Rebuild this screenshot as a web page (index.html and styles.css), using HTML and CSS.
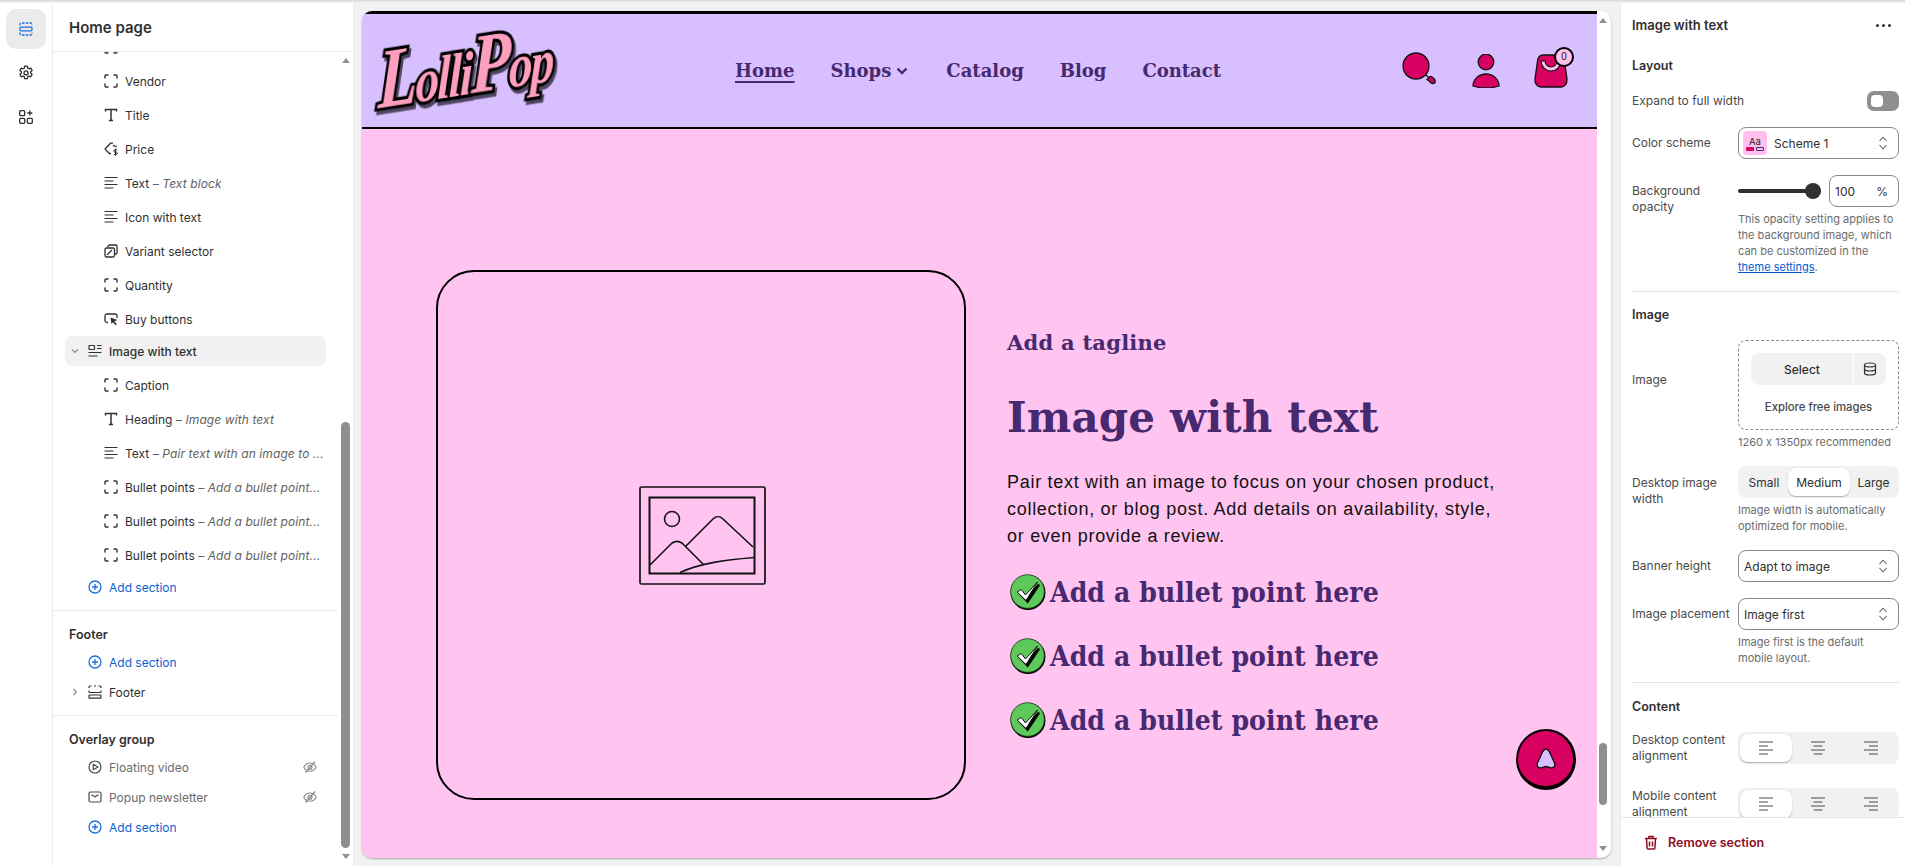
FILE: index.html
```html
<!DOCTYPE html>
<html lang="en">
<head>
<meta charset="utf-8">
<title>Home page</title>
<link rel="stylesheet" href="styles.css">
</head>
<body>
<svg class="defs" width="0" height="0" aria-hidden="true">
  <symbol id="i-block" viewBox="0 0 14 14"><path d="M1 4V2.200C1 1.500 1.500 1 2.200 1H4M10 1h1.800c.7 0 1.200.5 1.200 1.200V4M13 10v1.800c0 .7-.5 1.200-1.200 1.200H10M4 13H2.200C1.500 13 1 12.500 1 11.800V10" fill="none" stroke="currentColor" stroke-width="1.400" stroke-linecap="round"/></symbol>
  <symbol id="i-title" viewBox="0 0 14 14"><path d="M1.500 3.500V1.500h11v2M7 1.500v11M5 12.500h4" fill="none" stroke="currentColor" stroke-width="1.500"/></symbol>
  <symbol id="i-price" viewBox="0 0 14 14"><path d="M9 1.200H6.500L1 7l4.300 4.500H7M12 5.500V3.500" fill="none" stroke="currentColor" stroke-width="1.300" stroke-linejoin="round"/><circle cx="10" cy="3.700" r="1" fill="currentColor"/><path d="M13.200 7.800h-2.300a1.100 1.100 0 0 0 0 2.300h1.200a1.100 1.100 0 0 1 0 2.300H9.800M11.500 6.800v6.800" fill="none" stroke="currentColor" stroke-width="1"/></symbol>
  <symbol id="i-text" viewBox="0 0 14 14"><path d="M.5 1.500h13M.5 5h9M.5 8.500h13M.5 12h9" fill="none" stroke="currentColor" stroke-width="1.200"/></symbol>
  <symbol id="i-variant" viewBox="0 0 14 14"><path d="M4 3.500V2.300C4 1.600 4.600 1 5.300 1h6.400C12.400 1 13 1.600 13 2.300v6.400c0 .7-.6 1.300-1.300 1.300H10.500" fill="none" stroke="currentColor" stroke-width="1.300"/><rect x="1" y="4" width="9.500" height="9" rx="1.500" fill="none" stroke="currentColor" stroke-width="1.300"/><path d="M3 11l5-5" stroke="currentColor" stroke-width="1.300"/></symbol>
  <symbol id="i-buy" viewBox="0 0 14 14"><path d="M4 10.500H3C1.900 10.500 1 9.600 1 8.500V4c0-1.100.9-2 2-2h8c1.100 0 2 .9 2 2v2" fill="none" stroke="currentColor" stroke-width="1.300"/><path d="M6.500 5.500l7 2.500-3 1.200 2.300 3-1.300 1-2.300-3L7.500 12z" fill="currentColor"/></symbol>
  <symbol id="i-section" viewBox="0 0 14 14"><path d="M1 1.500h5.500M1 5.500h5.500M1 1.500v4M6.500 1.500v4M9 1.500h4.500M9 4.500h4.500M.5 8.500h13M.5 12h9" fill="none" stroke="currentColor" stroke-width="1.200"/></symbol>
  <symbol id="i-plus" viewBox="0 0 14 14"><circle cx="7" cy="7" r="6" fill="none" stroke="currentColor" stroke-width="1.300"/><path d="M7 4v6M4 7h6" stroke="currentColor" stroke-width="1.300"/></symbol>
  <symbol id="i-footer" viewBox="0 0 14 14"><path d="M1 3V2c0-.5.500-1 1-1h1.500M6 1h2M10.500 1H12c.5 0 1 .5 1 1v1M1 5.500v1c0 .5.500 1 1 1h10c.5 0 1-.5 1-1v-1" fill="none" stroke="currentColor" stroke-width="1.200"/><rect x="1" y="10" width="12" height="3.200" rx=".8" fill="none" stroke="currentColor" stroke-width="1.200"/></symbol>
  <symbol id="i-play" viewBox="0 0 14 14"><circle cx="7" cy="7" r="6" fill="none" stroke="currentColor" stroke-width="1.200"/><path d="M5.200 4.300v5.400L10 7z" fill="none" stroke="currentColor" stroke-width="1.200" stroke-linejoin="round"/></symbol>
  <symbol id="i-mail" viewBox="0 0 14 14"><rect x="1" y="2" width="12" height="10" rx="1.500" fill="none" stroke="currentColor" stroke-width="1.200"/><path d="M3.500 4.800L7 6.800l3.500-2" fill="none" stroke="currentColor" stroke-width="1.200"/></symbol>
  <symbol id="i-eye" viewBox="0 0 14 14"><path d="M.8 7.200C2.200 4.500 4.400 3 7 3s4.800 1.500 6.200 4.200C11.800 9.800 9.600 11.300 7 11.300S2.200 9.800.8 7.200z" fill="none" stroke="currentColor" stroke-width="1.100"/><circle cx="7" cy="7.200" r="2" fill="none" stroke="currentColor" stroke-width="1.100"/><path d="M2.500 12.500L12 1.500" stroke="currentColor" stroke-width="1.200"/></symbol>
  <symbol id="i-updown" viewBox="0 0 10 16"><path d="M1.500 6L5 2.200 8.500 6M1.500 10L5 13.800 8.500 10" fill="none" stroke="currentColor" stroke-width="1.100"/></symbol>
  <symbol id="i-left" viewBox="0 0 14 14"><path d="M0 1h14M0 5h9M0 9h14M0 13h9" stroke="currentColor" stroke-width="1.200"/></symbol>
  <symbol id="i-center" viewBox="0 0 14 14"><path d="M0 1h14M2.500 5h9M0 9h14M2.500 13h9" stroke="currentColor" stroke-width="1.200"/></symbol>
  <symbol id="i-right" viewBox="0 0 14 14"><path d="M0 1h14M5 5h9M0 9h14M5 13h9" stroke="currentColor" stroke-width="1.200"/></symbol>
  <symbol id="i-check" viewBox="0 0 36 36"><circle cx="18" cy="18.500" r="17.500" fill="#000"/><circle cx="17.500" cy="17.500" r="16.800" fill="#5fc85a" stroke="#1c3d1a" stroke-width=".8"/><path d="M7.500 18.500l4.500-2.500 3.800 5 11-12.500 2.500 1-12.500 18.500z" fill="#000" transform="translate(1 1.500)"/><path d="M7 18l4.300-2.500 4.200 5.500 12-13-11.500 18.500z" fill="#fff" stroke="#000" stroke-width=".9" stroke-linejoin="round"/></symbol>
</svg>

<div class="app">
  <nav class="rail">
    <button class="rail-btn is-active" aria-label="Sections">
      <svg width="14" height="14" viewBox="0 0 14 14"><path d="M1 3.500V2.300C1 1.600 1.600 1 2.300 1h9.400c.7 0 1.300.6 1.300 1.300v1.200M1 10.500v1.200c0 .7.600 1.300 1.300 1.300h9.400c.7 0 1.300-.6 1.300-1.300v-1.200" fill="none" stroke="#1a6fe0" stroke-width="1.300" stroke-dasharray="2.500 1.200"/><rect x="1" y="5.200" width="12" height="3.600" rx="1" fill="none" stroke="#1a6fe0" stroke-width="1.300"/></svg>
    </button>
    <button class="rail-btn" aria-label="Settings">
      <svg width="16" height="16" viewBox="0 0 16 16"><path d="M6.700 1.200h2.600l.4 1.900 1.300.7 1.800-.7 1.300 2.300-1.400 1.300v1.500l1.400 1.300-1.300 2.300-1.800-.7-1.300.7-.4 1.900H6.700l-.4-1.900-1.300-.7-1.800.7-1.300-2.300 1.400-1.300V6.700L1.900 5.400l1.300-2.300 1.800.7 1.300-.7z" fill="none" stroke="#303030" stroke-width="1.300" stroke-linejoin="round"/><circle cx="8" cy="7.900" r="2" fill="none" stroke="#303030" stroke-width="1.300"/></svg>
    </button>
    <button class="rail-btn" aria-label="Apps">
      <svg width="14" height="14" viewBox="0 0 14 14"><g fill="none" stroke="#303030" stroke-width="1.300"><rect x=".7" y=".7" width="5" height="5" rx="1"/><rect x=".7" y="8.300" width="5" height="5" rx="1"/><rect x="8.300" y="8.300" width="5" height="5" rx="1"/><path d="M10.800.5v5M8.300 3h5"/></g></svg>
    </button>
  </nav>

  <aside class="tree">
    <h1 class="tree-title">Home page</h1>
    <div class="tree-body">
      <div class="tree-list">
        <ul class="rows rows-clipped">
          <li class="row sub"><svg class="ic"><use href="#i-block"/></svg><span>Product</span></li>
          <li class="row sub"><svg class="ic"><use href="#i-block"/></svg><span>Vendor</span></li>
          <li class="row sub"><svg class="ic"><use href="#i-title"/></svg><span>Title</span></li>
          <li class="row sub"><svg class="ic"><use href="#i-price"/></svg><span>Price</span></li>
          <li class="row sub"><svg class="ic"><use href="#i-text"/></svg><span>Text <i>– Text block</i></span></li>
          <li class="row sub"><svg class="ic"><use href="#i-text"/></svg><span>Icon with text</span></li>
          <li class="row sub"><svg class="ic"><use href="#i-variant"/></svg><span>Variant selector</span></li>
          <li class="row sub"><svg class="ic"><use href="#i-block"/></svg><span>Quantity</span></li>
          <li class="row sub"><svg class="ic"><use href="#i-buy"/></svg><span>Buy buttons</span></li>
          <li class="row top is-selected">
            <svg class="chev" viewBox="0 0 10 10"><path d="M2 3.500l3 3 3-3" fill="none" stroke="currentColor" stroke-width="1.100"/></svg>
            <svg class="ic"><use href="#i-section"/></svg><span>Image with text</span>
          </li>
          <li class="row sub"><svg class="ic"><use href="#i-block"/></svg><span>Caption</span></li>
          <li class="row sub"><svg class="ic"><use href="#i-title"/></svg><span>Heading <i>– Image with text</i></span></li>
          <li class="row sub"><svg class="ic"><use href="#i-text"/></svg><span>Text <i>– Pair text with an image to ...</i></span></li>
          <li class="row sub"><svg class="ic"><use href="#i-block"/></svg><span>Bullet points <i>– Add a bullet point...</i></span></li>
          <li class="row sub"><svg class="ic"><use href="#i-block"/></svg><span>Bullet points <i>– Add a bullet point...</i></span></li>
          <li class="row sub"><svg class="ic"><use href="#i-block"/></svg><span>Bullet points <i>– Add a bullet point...</i></span></li>
          <li class="row top add"><svg class="ic"><use href="#i-plus"/></svg><span>Add section</span></li>
        </ul>
        <section class="group">
          <h2 class="group-title">Footer</h2>
          <ul class="rows">
            <li class="row top add"><svg class="ic"><use href="#i-plus"/></svg><span>Add section</span></li>
            <li class="row top">
              <svg class="chev" viewBox="0 0 10 10"><path d="M3.500 2l3 3-3 3" fill="none" stroke="currentColor" stroke-width="1.100"/></svg>
              <svg class="ic"><use href="#i-footer"/></svg><span>Footer</span>
            </li>
          </ul>
        </section>
        <section class="group">
          <h2 class="group-title">Overlay group</h2>
          <ul class="rows">
            <li class="row top is-hidden"><svg class="ic"><use href="#i-play"/></svg><span>Floating video</span><svg class="eye"><use href="#i-eye"/></svg></li>
            <li class="row top is-hidden"><svg class="ic"><use href="#i-mail"/></svg><span>Popup newsletter</span><svg class="eye"><use href="#i-eye"/></svg></li>
            <li class="row top add"><svg class="ic"><use href="#i-plus"/></svg><span>Add section</span></li>
          </ul>
        </section>
      </div>
      <div class="sbar sbar-tree">
        <span class="arrow-up"></span>
        <span class="thumb thumb-tree"></span>
        <span class="arrow-down"></span>
      </div>
    </div>
  </aside>

  <main class="preview">
    <div class="page">
      <header class="shop-head">
        <div class="logo"><span class="logo-word"><span class="cap">L</span>olli<span class="cap">P</span>op</span></div>
        <nav class="shop-nav">
          <a class="is-current">Home</a>
          <a class="has-caret">Shops<svg width="12" height="8" viewBox="0 0 12 8"><path d="M1.500 1.500L6 6l4.500-4.500" fill="none" stroke="#46296e" stroke-width="2.400"/></svg></a>
          <a>Catalog</a>
          <a>Blog</a>
          <a>Contact</a>
        </nav>
        <div class="shop-icons">
          <svg class="si-search" width="36" height="36" viewBox="0 0 36 36"><circle cx="14" cy="14" r="13" fill="#d80060" stroke="#111" stroke-width="1.300"/><path d="M24 23l2 2" stroke="#111" stroke-width="1.300"/><path d="M25 27.500l2.500-2.800c1-.6 2-.3 3 .6 2 1.700 3 3.500 2.700 4.800-.4 1.400-2.300 1.800-3.700 1z" fill="#d80060" stroke="#111" stroke-width="1.300"/></svg>
          <svg class="si-user" width="28" height="34" viewBox="0 0 28 34"><circle cx="14" cy="8" r="7.800" fill="#d80060" stroke="#111" stroke-width="1.300"/><path d="M1 32c0-7 6-12 13-12s13 5 13 12c-4 1.500-8 1.800-13 1.800S5 33.500 1 32z" fill="#d80060" stroke="#111" stroke-width="1.300"/></svg>
          <div class="si-bag">
            <svg width="34" height="34" viewBox="0 0 34 34"><path d="M9 1h16c3 0 5 2 5.500 6L33 25c.3 5-2.500 8-6 8H7c-3.500 0-6.300-3-6-8L3.500 7C4 3 6 1 9 1z" fill="#d80060" stroke="#111" stroke-width="1.300"/><path d="M7 7c0 5 4 10 10 10s10-5 10-10h-4c0 3-2.500 6-6 6s-6-3-6-6z" fill="#ffc0ee" stroke="#111" stroke-width="1.100"/></svg>
            <span class="bag-count">0</span>
          </div>
        </div>
      </header>
      <section class="hero">
        <div class="placeholder">
          <svg width="127" height="99" viewBox="0 0 127 99"><g fill="none" stroke="#111"><rect x="1" y="1" width="125" height="97" rx="1.500" stroke-width="1.700"/><rect x="10.500" y="11.500" width="105" height="76" stroke-width="2"/><circle cx="33" cy="33" r="7.500" stroke-width="1.500"/><path d="M11 79l22-22c3-2 7-2 10 0l21 21M47 60l27-27c3-3 7-3 10 0l30 28M41 86.500C62 77 86 74 115 71.500" stroke-width="1.600"/></g></svg>
        </div>
        <div class="hero-text">
          <p class="tagline">Add a tagline</p>
          <h2 class="hero-title">Image with text</h2>
          <p class="hero-copy">Pair text with an image to focus on your chosen product, collection, or blog post. Add details on availability, style, or even provide a review.</p>
          <ul class="bullets">
            <li><svg class="tick"><use href="#i-check"/></svg><span>Add a bullet point here</span></li>
            <li><svg class="tick"><use href="#i-check"/></svg><span>Add a bullet point here</span></li>
            <li><svg class="tick"><use href="#i-check"/></svg><span>Add a bullet point here</span></li>
          </ul>
        </div>
        <button class="fab" aria-label="Back to top">
          <svg width="24" height="24" viewBox="0 0 24 24"><path d="M12 2c1.500 0 2.500 1 3.500 3l5 11c1 3-.5 5-3 5-2.500 0-3.500-1.500-5.500-1.500S9 21 6.500 21 2.500 19 3.500 16l5-11C9.500 3 10.500 2 12 2z" fill="#d8bfff" stroke="#111" stroke-width="1.300"/></svg>
        </button>
      </section>
    </div>
    <div class="sbar sbar-page">
      <span class="arrow-up"></span>
      <span class="thumb thumb-page"></span>
      <span class="arrow-down"></span>
    </div>
  </main>

  <aside class="props">
    <div class="props-head">
      <h2>Image with text</h2>
      <span class="dots"><b></b><b></b><b></b></span>
    </div>
    <div class="props-body">
      <section class="pgroup pg-layout">
        <h3>Layout</h3>
        <div class="field f-toggle">
          <label>Expand to full width</label>
          <span class="toggle"><b></b></span>
        </div>
        <div class="field f-scheme">
          <label>Color scheme</label>
          <div class="select select-scheme">
            <span class="swatch"><span class="aa">Aa</span><span class="sw-bars"><b></b><u></u></span></span>
            <span>Scheme 1</span>
            <svg class="updown"><use href="#i-updown"/></svg>
          </div>
        </div>
        <div class="field f-opacity">
          <label>Background opacity</label>
          <div class="control">
            <div class="slider-line">
              <span class="slider"><b></b></span>
              <span class="num"><span>100</span><span>%</span></span>
            </div>
            <p class="help help-op">This opacity setting applies to the background image, which can be customized in the <a>theme settings</a>.</p>
          </div>
        </div>
      </section>
      <section class="pgroup pg-image">
        <h3>Image</h3>
        <div class="field f-image">
          <label>Image</label>
          <div class="control">
            <div class="drop">
              <div class="drop-btns"><span class="sel">Select</span><span class="db"><svg width="14" height="14" viewBox="0 0 14 14"><g fill="none" stroke="#303030" stroke-width="1.200"><ellipse cx="7" cy="3" rx="5.500" ry="2"/><path d="M1.500 3v8c0 1.100 2.500 2 5.500 2s5.500-.9 5.500-2V3M1.500 7c0 1.100 2.500 2 5.500 2s5.500-.9 5.500-2"/></g></svg></span></div>
              <span class="explore">Explore free images</span>
            </div>
            <p class="help help-rec">1260 x 1350px recommended</p>
          </div>
        </div>
        <div class="field f-width">
          <label>Desktop image width</label>
          <div class="control">
            <div class="seg seg-text"><span>Small</span><span class="on">Medium</span><span>Large</span></div>
            <p class="help help-w">Image width is automatically optimized for mobile.</p>
          </div>
        </div>
        <div class="field f-banner">
          <label>Banner height</label>
          <div class="select"><span>Adapt to image</span><svg class="updown"><use href="#i-updown"/></svg></div>
        </div>
        <div class="field f-place">
          <label>Image placement</label>
          <div class="control">
            <div class="select"><span>Image first</span><svg class="updown"><use href="#i-updown"/></svg></div>
            <p class="help help-w">Image first is the default mobile layout.</p>
          </div>
        </div>
      </section>
      <section class="pgroup pg-content">
        <h3>Content</h3>
        <div class="field f-align">
          <label>Desktop content alignment</label>
          <div class="seg seg-icons"><span class="on"><svg><use href="#i-left"/></svg></span><span><svg><use href="#i-center"/></svg></span><span><svg><use href="#i-right"/></svg></span></div>
        </div>
        <div class="field f-align">
          <label>Mobile content alignment</label>
          <div class="seg seg-icons"><span class="on"><svg><use href="#i-left"/></svg></span><span><svg><use href="#i-center"/></svg></span><span><svg><use href="#i-right"/></svg></span></div>
        </div>
      </section>
    </div>
    <div class="props-foot">
      <svg width="14" height="15" viewBox="0 0 14 15"><g fill="none" stroke="#8e0b21" stroke-width="1.500"><path d="M1 3.500h12M5 3.500V1.500h4v2M2.500 3.500l.6 9.500c0 .7.500 1 1 1h5.800c.5 0 1-.3 1-1l.6-9.500M5.500 6.500v5M8.500 6.500v5"/></g></svg>
      <span>Remove section</span>
    </div>
  </aside>
</div>
</body>
</html>
```

FILE: styles.css
```css
* { box-sizing: border-box; }
html, body { margin: 0; height: 100%; overflow: hidden; }
body { font-family: Inter, "Liberation Sans", sans-serif; font-size: 12px; color: #303030; background: #f1f1f1; }
ul { list-style: none; margin: 0; padding: 0; }
h1, h2, h3, p { margin: 0; }
button { border: 0; background: none; padding: 0; font: inherit; }
.defs { position: absolute; }

.app { display: flex; height: 866px; padding-top: 3px; box-shadow: inset 0 1px 2px rgba(0,0,0,.12); }

/* rail */
.rail { width: 53px; flex: none; background: #fff; border-right: 1px solid #ebebeb; padding: 6px 6px 0; display: flex; flex-direction: column; gap: 4px; }
.rail-btn { width: 40px; height: 40px; border-radius: 10px; display: flex; align-items: center; justify-content: center; }
.rail-btn.is-active { background: #ebebeb; }

/* tree */
.tree { width: 301px; flex: none; background: #fff; border-right: 1px solid #ebebeb; display: flex; flex-direction: column; min-height: 0; }
.tree-title { height: 49px; flex: none; padding: 0 0 0 16px; display: flex; align-items: center; font-size: 15px; font-weight: 600; color: #303030; border-bottom: 1px solid #ebebeb; background: #fff; position: relative; z-index: 1; }
.tree-body { flex: 1; min-height: 0; display: flex; }
.tree-list { width: 285px; flex: none; overflow: hidden; }
.rows-clipped { margin-top: -22px; padding-bottom: 8px; }
.row { display: flex; align-items: center; color: #303030; font-size: 12px; white-space: nowrap; }
.row i { color: #616161; letter-spacing: .1px; }
.row.sub { height: 34px; padding-left: 51px; }
.row.top { height: 30px; padding-left: 35px; }
.row .ic { width: 14px; height: 14px; flex: none; margin-right: 7px; color: #303030; }
.chev { width: 10px; height: 10px; margin: 0 8px 0 -18px; flex: none; color: #8a8a8a; }
.row.is-selected { background: #f1f1f1; border-radius: 8px; margin: 0 12px 2px 12px; padding-left: 23px; font-weight: 500; }
.row.add { color: #0a5fd0; }
.row.add .ic { color: #1a6fe0; }
.row.is-hidden { color: #6b6b6b; }
.row.is-hidden .ic { color: #4a4a4a; }
.eye { width: 14px; height: 14px; margin-left: auto; margin-right: 21px; color: #8a8a8a; }
.group { border-top: 1px solid #ebebeb; padding: 15px 0 8px; }
.group-title { height: 18px; line-height: 18px; padding-left: 16px; font-size: 12.500px; font-weight: 600; margin-bottom: 3px; }

/* scrollbars */
.sbar { display: flex; flex-direction: column; align-items: center; flex: none; }
.sbar-tree { width: 15px; padding-top: 6px; }
.sbar-page { width: 14px; background: #fff; padding: 7px 2px 7px 0; border-radius: 0 10px 10px 0; }
.arrow-up { width: 0; height: 0; border: 4.500px solid transparent; border-top: 0; border-bottom: 5px solid #8f8f8f; flex: none; }
.arrow-down { width: 0; height: 0; border: 4.500px solid transparent; border-bottom: 0; border-top: 5px solid #8f8f8f; flex: none; margin-top: auto; }
.thumb { background: #8f8f8f; border-radius: 5px; flex: none; }
.thumb-tree { width: 9px; height: 426px; margin-top: 359px; }
.thumb-page { width: 8px; height: 62px; margin-top: 720px; }
.sbar-tree .arrow-down { margin-bottom: 7px; }

/* preview */
.preview { flex: none; width: 1249px; height: 847px; margin: 8px 9px 8px 8px; display: flex; border-radius: 10px; overflow: hidden; box-shadow: 0 1px 2px rgba(0,0,0,.3); }
.page { width: 1235px; flex: none; display: flex; flex-direction: column; background: #ffc4f0; }
.shop-head { height: 118px; flex: none; background: #d8bfff; border-top: 3px solid #000; border-bottom: 2px solid #000; display: flex; align-items: center; padding: 0 29px 0 12px; }
.logo { width: 179px; height: 82px; flex: none; display: flex; align-items: center; justify-content: center; margin-top: -8px; }
.logo-word { font-family: "Liberation Serif", serif; font-style: italic; font-weight: 700; font-size: 48px; letter-spacing: -2px; color: #ff9fc0; -webkit-text-stroke: 5px #000; paint-order: stroke fill; filter: drop-shadow(2px 3px 0 #4f4560); transform: rotate(-9deg) skewX(-10deg) scaleY(1.25); display: inline-block; white-space: nowrap; margin-left: 4px; }
.logo-word .cap { font-size: 66px; }
.shop-nav { margin-left: 182px; display: flex; gap: 36px; font-family: "DejaVu Serif", serif; font-weight: 700; font-size: 18px; color: #46296e; align-items: center; }
.shop-nav .is-current { text-decoration: underline; text-underline-offset: 4px; text-decoration-thickness: 2px; }
.has-caret { display: flex; align-items: center; gap: 5px; margin-right: 2px; }
.shop-icons { margin-left: auto; display: flex; align-items: flex-end; gap: 34px; margin-top: -6px; height: 40px; }
.si-bag { position: relative; width: 34px; height: 34px; }
.si-bag svg { display: block; }
.bag-count { position: absolute; top: -7px; right: -6px; width: 20px; height: 20px; border-radius: 50%; background: #ffc0ee; border: 2px solid #000; font-size: 10px; line-height: 16px; text-align: center; color: #222; font-family: "Liberation Sans", sans-serif; }

.hero { flex: 1; position: relative; display: flex; align-items: flex-start; padding: 141px 0 0 74px; }
.placeholder { width: 530px; height: 530px; flex: none; border: 2px solid #000; border-radius: 38px; display: flex; align-items: center; justify-content: center; padding-left: 3px; }
.hero-text { margin-left: 41px; padding-top: 58px; width: 500px; }
.tagline { height: 30px; line-height: 30px; font-family: "DejaVu Serif", serif; font-weight: 700; font-size: 21px; color: #46296e; letter-spacing: .25px; }
.hero-title { margin-top: 30px; height: 60px; line-height: 60px; font-family: "DejaVu Serif", serif; font-weight: 700; font-size: 42px; color: #46296e; letter-spacing: .15px; white-space: nowrap; }
.hero-copy { margin-top: 21px; width: 495px; font-family: "Liberation Sans", sans-serif; font-size: 18px; line-height: 27px; color: #111; letter-spacing: .71px; }
.bullets { margin-top: 24px; display: flex; flex-direction: column; gap: 28px; }
.bullets li { display: flex; align-items: center; gap: 4px; height: 36px; font-family: "DejaVu Serif Condensed", "DejaVu Serif", serif; font-weight: 700; font-size: 28px; letter-spacing: .1px; color: #46296e; white-space: nowrap; margin-left: 3px; }
.tick { width: 36px; height: 36px; flex: none; }
.fab { position: absolute; right: 21px; bottom: 68px; width: 60px; height: 61px; border-radius: 50%; background: #d80060; border: 2px solid #000; border-bottom-width: 4px; border-right-width: 3px; display: flex; align-items: center; justify-content: center; }

/* properties */
.props { flex: 1; min-width: 0; background: #fff; border-left: 1px solid #ebebeb; display: flex; flex-direction: column; min-height: 0; }
.props-head { height: 44px; flex: none; padding: 0 14px 0 11px; display: flex; align-items: center; justify-content: space-between; }
.props-head h2 { font-size: 13px; font-weight: 600; }
.dots { display: flex; gap: 3px; }
.dots b { width: 3px; height: 3px; border-radius: 50%; background: #303030; }
.props-body { flex: 1; min-height: 0; overflow: hidden; padding: 10px 6px 0 11px; }
.pgroup { border-bottom: 1px solid #e3e3e3; }
.pgroup:last-child { border-bottom: 0; }
.pgroup h3 { height: 18px; line-height: 18px; font-size: 12.500px; font-weight: 600; color: #303030; }
.field { display: grid; grid-template-columns: 106px 161px; color: #4a4a4a; }
.field label { line-height: 16px; }
.control { display: flex; flex-direction: column; min-width: 0; }
.f-toggle { align-items: center; height: 20px; margin-top: 16px; }
.f-toggle label { white-space: nowrap; }
.toggle { justify-self: end; width: 32px; height: 20px; background: #8f8f8f; border-radius: 7px; padding: 4px; display: block; }
.toggle b { display: block; width: 12px; height: 12px; background: #fff; border-radius: 4px; }
.select { height: 32px; border: 1px solid #8a8a8a; border-radius: 8px; display: flex; align-items: center; padding: 0 8px 0 5px; color: #303030; }
.select > span:first-child { flex: 1; }
.updown { width: 10px; height: 16px; flex: none; color: #616161; margin-right: 2px; }
.select-scheme { padding-left: 4px; }
.select-scheme > span:first-child { flex: none; }
.select-scheme > span:nth-child(2) { flex: 1; }
.f-scheme { align-items: center; margin-top: 16px; }
.swatch { width: 24px; height: 24px; background: #ffc0ee; border-radius: 4px; margin-right: 7px; display: flex; flex-direction: column; align-items: center; justify-content: center; }
.aa { font-size: 9.500px; line-height: 11px; color: #222; }
.sw-bars { display: flex; gap: 2px; }
.sw-bars b { width: 8px; height: 4px; background: #d80060; border-radius: 1px; }
.sw-bars u { width: 8px; height: 4px; border: 1px solid #46296e; border-radius: 1px; }
.f-opacity { margin-top: 16px; }
.f-opacity label { padding-top: 8px; }
.slider-line { display: flex; align-items: center; gap: 8px; }
.slider { flex: 1; height: 4px; background: #303030; border-radius: 2px; position: relative; display: block; }
.slider b { position: absolute; right: 0; top: -6px; width: 16px; height: 16px; border-radius: 50%; background: #303030; }
.num { width: 70px; height: 32px; border: 1px solid #8a8a8a; border-radius: 8px; display: flex; justify-content: space-between; align-items: center; padding: 0 10px 0 5px; color: #303030; }
.help { font-size: 11px; line-height: 16px; color: #6b6b6b; font-feature-settings: "calt" 0; }
.help a { color: #005bd3; text-decoration: underline; }
.help-op { margin-top: 4px; }
.pg-layout { padding-bottom: 16px; }
.pg-image { padding: 14px 0 16px; }
.f-image { margin-top: 16px; align-items: start; }
.f-image label { padding-top: 32px; }
.drop { height: 90px; border: 1px dashed #8a8a8a; border-radius: 8px; padding: 12px 12px 0; display: flex; flex-direction: column; align-items: center; }
.drop-btns { display: flex; width: 100%; height: 32px; gap: 1px; flex: none; }
.sel { flex: 1; background: #f1f1f1; border-radius: 8px 0 0 8px; display: flex; align-items: center; justify-content: center; font-weight: 500; color: #303030; }
.db { width: 32px; background: #f1f1f1; border-radius: 0 8px 8px 0; display: flex; align-items: center; justify-content: center; }
.explore { margin-top: 15px; font-weight: 500; font-size: 11.300px; color: #4a4a4a; }
.help-rec { margin-top: 4px; }
.f-width { margin-top: 16px; }
.f-width label { padding-top: 9px; }
.seg { display: flex; height: 32px; background: #f1f1f1; border-radius: 8px; padding: 2px; color: #303030; }
.seg-text span { display: flex; align-items: center; justify-content: center; border-radius: 8px; }
.seg-text span:nth-child(1) { width: 48px; }
.seg-text span:nth-child(2) { width: 62px; }
.seg-text span:nth-child(3) { flex: 1; }
.seg .on { background: #fff; box-shadow: 0 1px 1px rgba(0,0,0,.25), 0 0 1px rgba(0,0,0,.15); }
.help-w { margin-top: 4px; }
.f-banner { margin-top: 16px; align-items: center; }
.f-place { margin-top: 16px; }
.f-place label { padding-top: 8px; white-space: nowrap; }
.pg-content { padding-top: 15px; }
.seg-icons span { flex: 1; display: flex; align-items: center; justify-content: center; border-radius: 8px; }
.seg-icons svg { width: 14px; height: 14px; color: #4a4a4a; }
.f-align { margin-top: 24px; }
.pg-content h3 + .f-align { margin-top: 16px; }
.props-foot { height: 49px; flex: none; background: #fff; border-top: 1px solid #e3e3e3; display: flex; align-items: center; gap: 10px; padding-left: 23px; color: #8e0b21; font-weight: 600; font-size: 12.500px; }
```
